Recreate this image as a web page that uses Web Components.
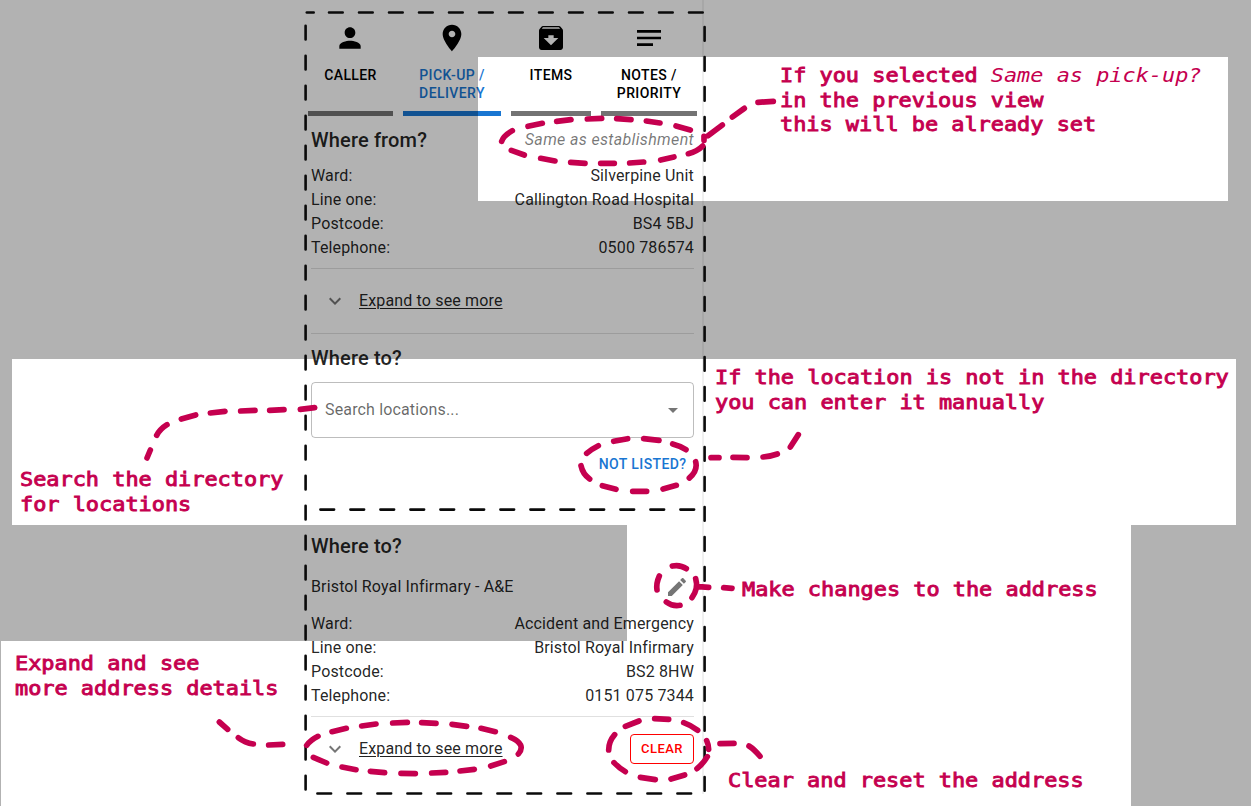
<!DOCTYPE html>
<html lang="en">
<head>
<meta charset="utf-8">
<title>Pick-up and delivery guide</title>
<style>
html,body{margin:0;padding:0;background:#fff;overflow:hidden}
body{width:1251px;height:806px;font-family:Roboto,"Liberation Sans",sans-serif}
</style>
</head>
<body>
<guide-page></guide-page>
<script>
const define = (name, render) => customElements.define(name, class extends HTMLElement {
  constructor() {
    super();
    this.attachShadow({ mode: 'open' });
  }
  connectedCallback() {
    this.shadowRoot.innerHTML = render(this);
  }
});

const ICONS = {
  person: 'M12 12c2.21 0 4-1.79 4-4s-1.79-4-4-4-4 1.79-4 4 1.79 4 4 4zm0 2c-2.67 0-8 1.34-8 4v2h16v-2c0-2.66-5.33-4-8-4z',
  place: 'M12 2C8.13 2 5 5.13 5 9c0 5.25 7 13 7 13s7-7.75 7-13c0-3.87-3.13-7-7-7zm0 9.5c-1.38 0-2.500-1.120-2.500-2.500s1.120-2.500 2.500-2.500 2.500 1.120 2.500 2.500-1.120 2.500-2.500 2.500z',
  archive: 'M20.54 5.23l-1.39-1.68C18.88 3.21 18.47 3 18 3H6c-.47 0-.88.21-1.16.55L3.46 5.23C3.17 5.57 3 6.02 3 6.500V19c0 1.100.9 2 2 2h14c1.100 0 2-.9 2-2V6.500c0-.48-.17-.93-.46-1.270zM12 17.500L6.500 12H10v-2h4v2h3.500L12 17.500zM5.120 5l.81-1h12l.94 1H5.120z',
  notes: 'M3 18h12v-2H3v2zM3 6v2h18V6H3zm0 7h18v-2H3v2z',
  expand: 'M16.590 8.590 12 13.170 7.410 8.590 6 10l6 6 6-6z',
  drop: 'M7 10l5 5 5-5z',
  edit: 'M3 17.250V21h3.750L17.810 9.940l-3.750-3.750L3 17.250zM20.710 7.040c.39-.39.39-1.020 0-1.410l-2.340-2.340c-.39-.39-1.020-.39-1.410 0l-1.830 1.830 3.750 3.750 1.830-1.830z'
};

define('ui-icon', el => `
  <style>:host{display:block;flex:none;width:${el.getAttribute('size') || 24}px;height:${el.getAttribute('size') || 24}px}
  svg{display:block;width:100%;height:100%;fill:currentColor}</style>
  <svg viewBox="0 0 24 24"><path d="${ICONS[el.getAttribute('name')]}"/></svg>`);

define('step-tab', el => `
  <style>:host{display:flex;flex-direction:column;align-items:center;box-sizing:border-box;height:94px;flex:none;
    border-bottom:5px solid #737373;color:#000;font:500 14px/18px Roboto,sans-serif;letter-spacing:.4px;text-align:center;text-transform:uppercase}
  :host([active]){color:#1976d2;border-color:#1976d2}
  ui-icon{color:#000;margin-bottom:12px}
  ui-icon[name=person]{margin-right:1px}</style>
  <ui-icon name="${el.getAttribute('icon')}" size="32"></ui-icon><div><slot></slot></div>`);

define('step-tabs', () => `
  <style>:host{display:flex;gap:10px;padding:22px 0 0 2px}</style><slot></slot>`);

define('section-title', () => `
  <style>:host{display:flex;justify-content:space-between;align-items:center;height:32px;font:500 20px/32px Roboto,sans-serif;letter-spacing:.15px;color:rgba(0,0,0,.87)}
  ::slotted(em){font:italic 400 16px/24px Roboto,sans-serif;letter-spacing:.35px;color:rgba(0,0,0,.54)}</style><slot></slot>`);

define('detail-row', el => `
  <style>:host{display:flex;justify-content:space-between;height:24px;font:400 16px/24px Roboto,sans-serif;letter-spacing:.15px;color:rgba(0,0,0,.87)}</style>
  <span>${el.getAttribute('label')}:</span><span><slot></slot></span>`);

define('expand-row', () => `
  <style>:host{display:flex;align-items:center;box-sizing:border-box;height:63px;padding-left:12px;font:400 16px/24px Roboto,sans-serif;letter-spacing:.15px;color:rgba(0,0,0,.87)}
  ui-icon{color:rgba(0,0,0,.54);margin-right:12px}
  u{flex:1;text-decoration-thickness:1px;text-underline-offset:2px}</style>
  <ui-icon name="expand"></ui-icon><u>Expand to see more</u><slot></slot>`);

define('thin-rule', () => `<style>:host{display:block;height:1px;background:rgba(0,0,0,.12)}</style>`);

define('location-select', () => `
  <style>:host{display:flex;align-items:center;justify-content:space-between;box-sizing:border-box;height:56px;padding:0 8px 0 13px;border:1px solid rgba(0,0,0,.26);border-radius:4px;
    font:400 16px/24px Roboto,sans-serif;letter-spacing:.15px;color:rgba(0,0,0,.6)}
  ui-icon{color:rgba(0,0,0,.54)}</style>
  <slot></slot><ui-icon name="drop"></ui-icon>`);

define('text-button', () => `
  <style>:host{display:block;box-sizing:border-box;font:500 14px/24px Roboto,sans-serif;letter-spacing:.4px;color:#1976d2;text-align:right;padding:14px 7.500px 0 0;height:92px}</style><slot></slot>`);

define('clear-button', () => `
  <style>:host{display:block;box-sizing:border-box;width:64px;height:30px;border:1px solid #f00;border-radius:4px;text-align:center;
    font:500 13px/28px Roboto,sans-serif;letter-spacing:.46px;color:#f00}</style><slot></slot>`);

define('order-form', () => `
  <style>:host{display:block;box-sizing:border-box;width:398px;height:794px;margin:0 0 0 306px;border-right:2px solid #f0f0f0}
  main{padding:8px 8px 0 5px}
  .rows{padding:8px 0}
  .picked{display:flex;align-items:center;justify-content:space-between;height:24px;padding-right:5px;margin-top:13px;font:400 16px/24px Roboto,sans-serif;letter-spacing:.15px;color:rgba(0,0,0,.87)}
  .picked ui-icon{color:rgba(0,0,0,.54)}
  </style>
  <step-tabs>
    <step-tab icon="person" style="width:85px">Caller</step-tab>
    <step-tab icon="place" active style="width:98px">Pick-up /<br>Delivery</step-tab>
    <step-tab icon="archive" style="width:80px">Items</step-tab>
    <step-tab icon="notes" style="width:96px">Notes /<br>Priority</step-tab>
  </step-tabs>
  <main>
    <section-title>Where from?<em>Same as establishment</em></section-title>
    <div class="rows">
      <detail-row label="Ward">Silverpine Unit</detail-row>
      <detail-row label="Line one">Callington Road Hospital</detail-row>
      <detail-row label="Postcode">BS4 5BJ</detail-row>
      <detail-row label="Telephone">0500 786574</detail-row>
    </div>
    <thin-rule></thin-rule>
    <expand-row></expand-row>
    <thin-rule style="margin-top:1px"></thin-rule>
    <section-title style="margin:8px 0">Where to?</section-title>
    <location-select>Search locations...</location-select>
    <text-button>NOT LISTED?</text-button>
    <section-title>Where to?</section-title>
    <div class="picked">Bristol Royal Infirmary - A&amp;E<ui-icon name="edit"></ui-icon></div>
    <div class="rows" style="padding-top:13px">
      <detail-row label="Ward">Accident and Emergency</detail-row>
      <detail-row label="Line one">Bristol Royal Infirmary</detail-row>
      <detail-row label="Postcode">BS2 8HW</detail-row>
      <detail-row label="Telephone">0151 075 7344</detail-row>
    </div>
    <thin-rule></thin-rule>
    <expand-row><clear-button>CLEAR</clear-button></expand-row>
  </main>`);

/* Darkens everything outside the highlighted regions. */
define('dim-mask', () => `
  <style>:host{position:absolute;inset:0}svg{display:block}</style>
  <svg width="1251" height="806" shape-rendering="crispEdges"><path fill="#000" fill-opacity=".3" fill-rule="evenodd"
  d="M0 0H1251V806H0ZM478 57H1228V201H478ZM12 359H1236V525H1131V806H1V641H627V525H12Z"/></svg>`);

/* Each stroke group: origin, unit scale and its dashes. */
const MARKS = [
  [500, 0, 'M84 379L127 370M170 364L213 359M262 357L305 355M350 356L393 359M439 363L480 369M528 378L571 390M612 409V421M608 438Q592 454 565 461M522 471L482 480M431 486L389 489M343 490H302M255 490L212 487M165 483L122 475M73 465L34 451M5 424Q10 408 37 392M624 407L667 375M697 351L733 325M774 307L820 304'],
  [300, 340, 'M941 304L983 296M1031 296L1077 301M1118 312Q1141 318 1158 329M1187 365Q1194 392 1168 414M1129 436L1089 447M1040 454H998M948 448L907 437M869 417Q848 402 843 377M860 340Q875 327 895 317M1233 353H1257M1299 352L1341 353M1389 351Q1413 349 1432 342M1471 321L1495 284'],
  [0, 350, 'M441 324L451 300M470 256Q480 237 501 224M544 207L587 195M631 189L675 184M722 183L765 181M809 181L852 179M901 178L944 173'],
  [0, 630, 'M658 276L683 298M715 323Q735 338 760 342M806 345L848 343'],
  [300, 690, 'M20 166Q32 150 54 139M96 125L139 115M185 108L228 102M278 99L322 97M365 98L408 100M456 103L500 109M543 115L586 125M632 142Q680 163 655 192M613 215L572 228M523 238L480 243M437 247L395 249M346 251L303 250M254 248L211 244M168 239L126 231M80 219L40 202'],
  [590, 690, 'M106 109L147 93M194 86L236 88M281 98Q304 106 323 121M350 152Q356 165 356 178M352 200Q340 220 321 236M284 255L243 267M196 269L151 262M106 245Q86 233 72 218M56 180Q56 155 74 134M390 161L432 160M477 168Q493 178 510 199'],
  [300, 500, 'M1117 198Q1140 193 1159 206M1187 236Q1196 265 1176 293M1140 316Q1118 320 1099 306M1071 270Q1068 250 1078 228M1196 260L1226 262M1271 263L1296 265']
];

define('guide-lines', () => `
  <style>:host{position:absolute;inset:0}svg{display:block}
  .frame{fill:none;stroke:#0a0a0a;stroke-width:2.600;stroke-linecap:round;stroke-dasharray:13.700 16.300}
  .mark{fill:none;stroke:#c5004f;stroke-width:17;stroke-linecap:round;stroke-linejoin:round}</style>
  <svg width="1251" height="806">
    <g class="frame">
      <path d="M306.800 12.500H313.700" style="stroke-dasharray:none"/>
      <path d="M329 12.500H703M305.600 25.700V790M704.600 27V792M320.400 509.600H695M317.400 793.500H692"/>
    </g>
    ${MARKS.map(([x, y, d]) => `<path class="mark" transform="translate(${x} ${y}) scale(.33333)" d="${d}"/>`).join('')}
  </svg>`);

define('guide-note', el => `
  <style>:host{position:absolute;left:${el.getAttribute('x')}px;top:${el.getAttribute('y')}px;white-space:nowrap;color:#c5004f;
    font:400 20px/24.700px "DejaVu Sans Mono",monospace;-webkit-text-stroke:.9px #c5004f;transform:scaleX(1.094);transform-origin:0 0}
  ::slotted(i){-webkit-text-stroke:0}</style><slot></slot>`);

define('guide-page', () => `
  <style>:host{display:block;position:relative;width:1251px;height:806px;overflow:hidden}
  order-form{padding:0}</style>
  <order-form></order-form>
  <dim-mask></dim-mask>
  <guide-lines></guide-lines>
  <guide-note x="780" y="63">If you selected <i>Same as pick-up?</i><br>in the previous view<br>this will be already set</guide-note>
  <guide-note x="715" y="365">If the location is not in the directory<br>you can enter it manually</guide-note>
  <guide-note x="20" y="467">Search the directory<br>for locations</guide-note>
  <guide-note x="742" y="577">Make changes to the address</guide-note>
  <guide-note x="15" y="651">Expand and see<br>more address details</guide-note>
  <guide-note x="728" y="768">Clear and reset the address</guide-note>`);
</script>
</body>
</html>
